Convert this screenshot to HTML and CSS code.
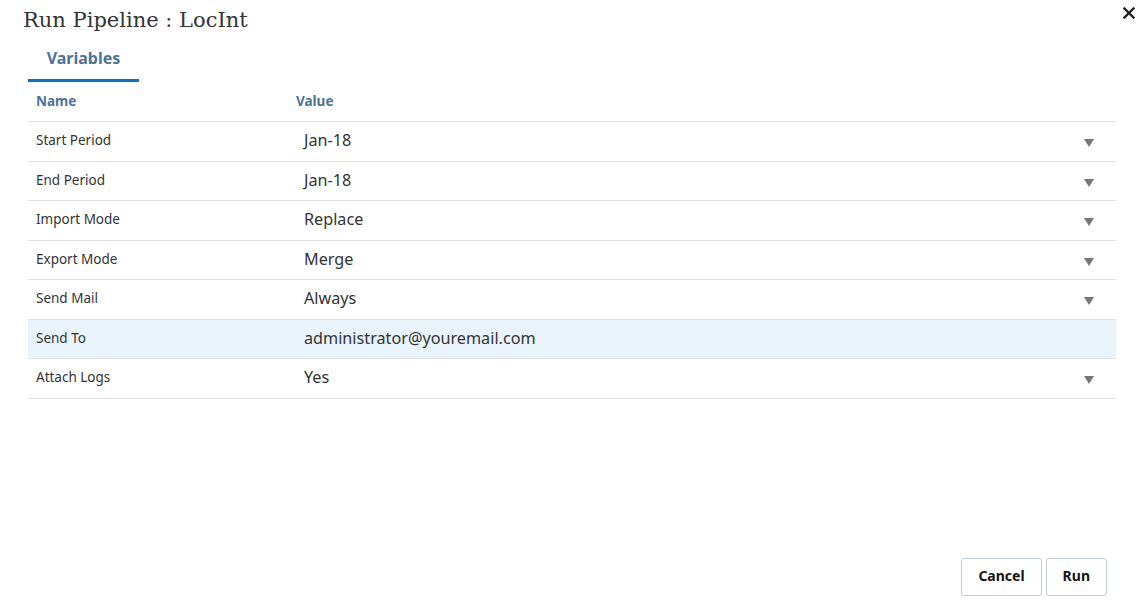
FILE: index.html
```html
<!DOCTYPE html>
<html lang="en">
<head>
  <meta charset="UTF-8" />
  <title>Run Pipeline : LocInt</title>
  <link rel="stylesheet" href="styles.css">
</head>
<body>

  <div class="dialog">
    <div class="header">
      <h1>Run Pipeline : LocInt</h1>
      <button class="close" title="Close">
        <svg width="12" height="12" viewBox="0 0 12 12"><path d="M1.5 1.5 L10.5 10.5 M10.5 1.5 L1.5 10.5" stroke="#222" stroke-width="2.4" stroke-linecap="square"/></svg>
      </button>
    </div>

    <div class="tabs">
      <div class="tab active">Variables</div>
    </div>

    <div class="grid">
      <div class="row head">
        <div class="name">Name</div>
        <div class="value">Value</div>
      </div>
      <div class="row">
        <div class="name">Start Period</div>
        <div class="value"><span>Jan-18</span><i class="arrow"></i></div>
      </div>
      <div class="row">
        <div class="name">End Period</div>
        <div class="value"><span>Jan-18</span><i class="arrow"></i></div>
      </div>
      <div class="row">
        <div class="name">Import Mode</div>
        <div class="value"><span>Replace</span><i class="arrow"></i></div>
      </div>
      <div class="row">
        <div class="name">Export Mode</div>
        <div class="value"><span>Merge</span><i class="arrow"></i></div>
      </div>
      <div class="row">
        <div class="name">Send Mail</div>
        <div class="value"><span>Always</span><i class="arrow"></i></div>
      </div>
      <div class="row selected">
        <div class="name">Send To</div>
        <div class="value"><span>administrator@youremail.com</span></div>
      </div>
      <div class="row">
        <div class="name">Attach Logs</div>
        <div class="value"><span>Yes</span><i class="arrow"></i></div>
      </div>
    </div>

    <div class="footer">
      <button class="btn">Cancel</button>
      <button class="btn">Run</button>
    </div>
  </div>

</body>
</html>
```

FILE: styles.css
```css
* {
  box-sizing: border-box;
}
body {
  margin: 0;
  font-family: "Noto Sans", "Open Sans", sans-serif;
  color: #333;
  background: white;
}
.dialog {
  height: 100vh;
  display: flex;
  flex-direction: column;
  padding: 0 28px 0 28px;
}
.header {
  display: flex;
  justify-content: space-between;
  align-items: flex-start;
  margin-left: -5px;
  margin-right: -19px;
}
h1 {
  font-family: "DejaVu Serif", Georgia, serif;
  font-weight: normal;
  font-size: 21px;
  color: #333;
  margin: 6px 0 0 0;
  line-height: 28px;
}
.close {
  background: none;
  border: none;
  padding: 0;
  margin-top: 7px;
  width: 12px;
  height: 12px;
  cursor: pointer;
  display: flex;
}
.tabs {
  display: flex;
  margin-top: 9px;
}
.tab {
  width: 111px;
  text-align: center;
  font-size: 16px;
  font-weight: bold;
  color: #4a7398;
  height: 39px;
  line-height: 30px;
  border-bottom: 3px solid #0572ce;
}
.grid {
  display: flex;
  flex-direction: column;
}
.row {
  display: flex;
  align-items: center;
  height: 39.5px;
  border-bottom: 1px solid #e0e0e0;
  font-size: 13.5px;
}
.row .name,
.row .value {
  margin-top: -2px;
}
.row.head {
  height: 40px;
  font-weight: bold;
  color: #4a7398;
  font-size: 13.5px;
}
.row.selected {
  background: #e8f3fb;
}
.name {
  width: 260px;
  padding-left: 8px;
}
.value {
  flex: 1;
  display: flex;
  align-items: center;
  justify-content: space-between;
  padding-left: 8px;
  padding-right: 22px;
}
.row:not(.head) .value span {
  font-size: 16.2px;
  padding-left: 8px;
}
.arrow {
  width: 0;
  height: 0;
  border-left: 5.5px solid transparent;
  border-right: 5.5px solid transparent;
  border-top: 8px solid #767676;
  margin-top: 6px;
}
.footer {
  margin-top: auto;
  display: flex;
  justify-content: flex-end;
  gap: 4px;
  padding: 0 9px 17px 0;
}
.btn {
  height: 38px;
  background: white;
  border: 1px solid #c4ced7;
  border-radius: 3px;
  font-family: "Noto Sans", "Open Sans", sans-serif;
  font-weight: bold;
  font-size: 14px;
  line-height: 34px;
  color: #161513;
  padding: 0 16px 2px 16px;
  cursor: pointer;
}
```
